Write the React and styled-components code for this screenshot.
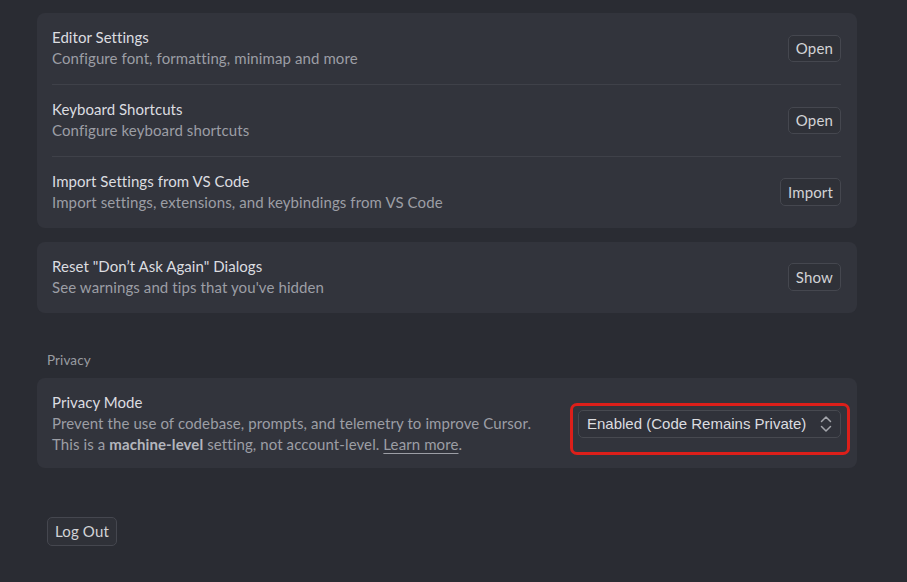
import React from "react";
import styled, { createGlobalStyle } from "styled-components";

const Global = createGlobalStyle`
  html, body { margin: 0; padding: 0; background: #2a2c33; }
  body { font-family: "Lato", "Noto Sans", sans-serif; -webkit-font-smoothing: antialiased; }
  * { box-sizing: border-box; }
`;

const Page = styled.div`
  width: 907px;
  height: 582px;
  overflow: hidden;
  background: #2a2c33;
  padding: 13px 50px 0 37px;
  display: flex;
  flex-direction: column;
`;

const Card = styled.div`
  background: #32343c;
  border-radius: 8px;
  padding: 0 16px 0 15px;
  margin-bottom: ${(p) => p.$mb || 0}px;
`;

const Row = styled.div`
  display: flex;
  align-items: center;
  justify-content: space-between;
  padding: 14px 0 ${(p) => p.$pb ?? 15}px;
  & + & { border-top: 1px solid #3f4149; }
`;

const Texts = styled.div`
  display: flex;
  flex-direction: column;
`;

const Title = styled.div`
  font-size: 15px;
  line-height: 21px;
  color: #dcdde0;
  letter-spacing: 0.05px;
`;

const Desc = styled.div`
  font-size: 15px;
  line-height: 21px;
  color: #9c9ea5;
  letter-spacing: 0.1px;
  b { font-weight: 700; color: #b4b6bc; }
  a { color: inherit; text-decoration: underline; text-underline-offset: 3px; text-decoration-thickness: 1px; }
`;

const Button = styled.button`
  font-family: inherit;
  font-size: 15px;
  line-height: 19px;
  letter-spacing: 0.15px;
  color: #d2d3d6;
  background: #2f3138;
  border: 1px solid #45474f;
  border-radius: 5px;
  padding: 3px 7px 3px;
  height: ${(p) => p.$h || 27}px;
  cursor: pointer;
`;

const SectionLabel = styled.div`
  font-size: 13.5px;
  line-height: 20px;
  color: #9a9ca2;
  letter-spacing: 0.1px;
  margin: 37px 0 8px 10px;
`;

const SelectWrap = styled.div`
  position: relative;
`;

const Highlight = styled.div`
  position: absolute;
  left: -8px;
  right: -9px;
  top: -7px;
  bottom: -17px;
  border: 3px solid #dc1f1a;
  border-radius: 7px;
  pointer-events: none;
`;

const Select = styled.div`
  display: flex;
  align-items: center;
  gap: 14px;
  width: 263px;
  height: 28px;
  padding: 0 7px 0 8px;
  background: #30323a;
  border: 1px solid #474950;
  border-radius: 5px;
  font-family: "Liberation Sans", Arial, sans-serif;
  font-size: 15px;
  color: #dcdde0;
  white-space: nowrap;
`;

const LogOutRow = styled.div`
  margin: 49px 0 0 10px;
`;

const Chevrons = () => (
  <svg width="12" height="18" viewBox="0 0 12 18" fill="none" stroke="#a3a5ab" strokeWidth="1.5" strokeLinecap="round" strokeLinejoin="round">
    <path d="M1.5 6.5 L6 2 L10.5 6.5" />
    <path d="M1.5 11.5 L6 16 L10.5 11.5" />
  </svg>
);

export default function App() {
  return (
    <>
      <Global />
      <Page>
        <Card $mb={14}>
          <Row>
            <Texts>
              <Title>Editor Settings</Title>
              <Desc>Configure font, formatting, minimap and more</Desc>
            </Texts>
            <Button>Open</Button>
          </Row>
          <Row>
            <Texts>
              <Title>Keyboard Shortcuts</Title>
              <Desc>Configure keyboard shortcuts</Desc>
            </Texts>
            <Button>Open</Button>
          </Row>
          <Row>
            <Texts>
              <Title>Import Settings from VS Code</Title>
              <Desc>Import settings, extensions, and keybindings from VS Code</Desc>
            </Texts>
            <Button $h={28}>Import</Button>
          </Row>
        </Card>
        <Card>
          <Row>
            <Texts>
              <Title>Reset "Don’t Ask Again" Dialogs</Title>
              <Desc>See warnings and tips that you've hidden</Desc>
            </Texts>
            <Button $h={28}>Show</Button>
          </Row>
        </Card>
        <SectionLabel>Privacy</SectionLabel>
        <Card>
          <Row $pb={13}>
            <Texts>
              <Title>Privacy Mode</Title>
              <Desc>Prevent the use of codebase, prompts, and telemetry to improve Cursor.</Desc>
              <Desc>
                This is a <b>machine-level</b> setting, not account-level. <a>Learn more</a>.
              </Desc>
            </Texts>
            <SelectWrap>
              <Highlight />
              <Select>
                <span>Enabled (Code Remains Private)</span>
                <Chevrons />
              </Select>
            </SelectWrap>
          </Row>
        </Card>
        <LogOutRow>
          <Button $h={29}>Log Out</Button>
        </LogOutRow>
      </Page>
    </>
  );
}
